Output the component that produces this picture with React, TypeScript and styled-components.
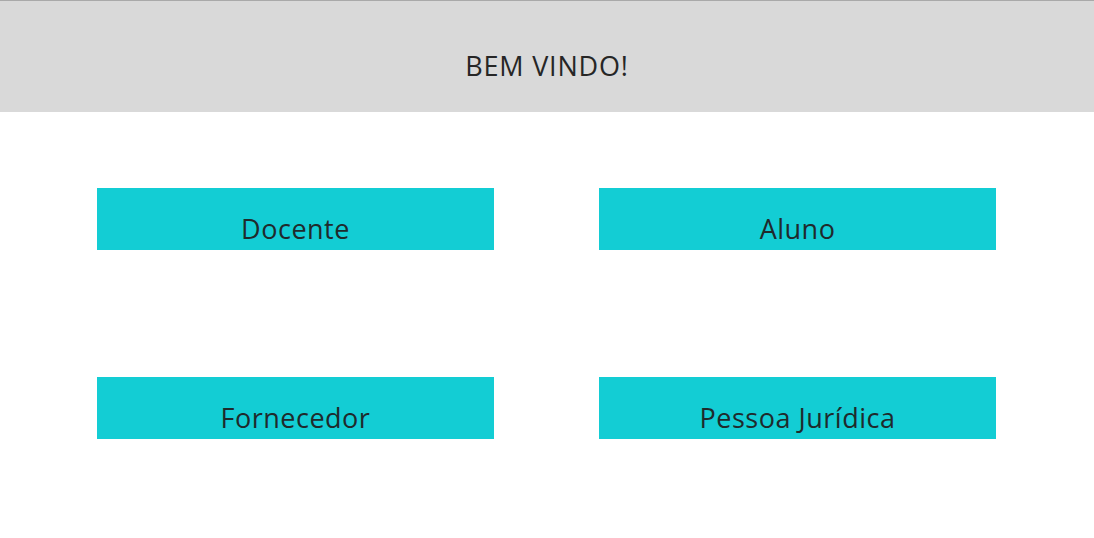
import styled, { createGlobalStyle } from 'styled-components'

const GlobalStyle = createGlobalStyle`
  body {
    margin: 0;
    background: #ffffff;
    font-family: 'Open Sans', 'Noto Sans', sans-serif;
  }
`

const options = ['Docente', 'Aluno', 'Fornecedor', 'Pessoa Jurídica']

export default function App() {
  return (
    <>
      <GlobalStyle />
      <Header>
        <Title>BEM VINDO!</Title>
      </Header>
      <Grid>
        {options.map((label) => (
          <OptionButton key={label}>{label}</OptionButton>
        ))}
      </Grid>
    </>
  )
}

const Header = styled.header`
  display: flex;
  align-items: center;
  justify-content: center;
  height: 111px;
  background-color: #d9d9d9;
  border-top: 1px solid #a9a9a9;
`

const Title = styled.h1`
  margin: 0;
  padding-top: 17px;
  font-size: 27px;
  font-weight: 400;
  color: #262626;
  letter-spacing: 0.8px;
`

const Grid = styled.main`
  display: grid;
  grid-template-columns: 397px 397px;
  column-gap: 105px;
  row-gap: 127px;
  padding: 76px 0 0 97px;
`

const OptionButton = styled.button`
  height: 62px;
  padding: 20px 0 0;
  border: none;
  border-radius: 0;
  background-color: #13cdd4;
  font-family: 'Open Sans', 'Noto Sans', sans-serif;
  font-size: 27px;
  font-weight: 400;
  color: #1f2a2c;
  letter-spacing: 0.5px;
  line-height: 1.36;
  cursor: pointer;
`
